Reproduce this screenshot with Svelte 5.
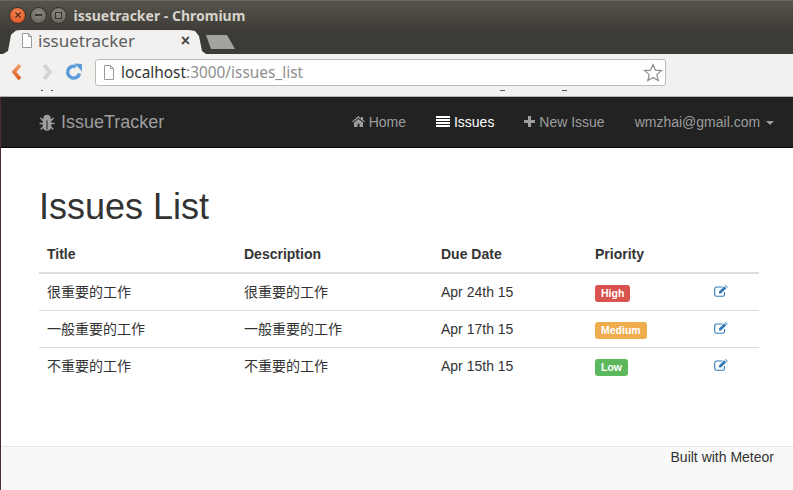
<script>
  const issues = [
    { title: '很重要的工作', due: 'Apr 24th 15', level: 'High', tone: 'high' },
    { title: '一般重要的工作', due: 'Apr 17th 15', level: 'Medium', tone: 'medium' },
    { title: '不重要的工作', due: 'Apr 15th 15', level: 'Low', tone: 'low' }
  ];
</script>

<div class="window">
  <header class="frame">
    <div class="titlebar">
      <span class="btn close">
        <svg width="8" height="8" viewBox="0 0 8 8"><path d="M1.500 1.500l5 5M6.500 1.500l-5 5" stroke="#5a2412" stroke-width="1.400"/></svg>
      </span>
      <span class="btn"><i class="min"></i></span>
      <span class="btn"><i class="max"></i></span>
      <span class="wintitle">issuetracker - Chromium</span>
    </div>
    <div class="tabs">
      <div class="tab">
        <svg class="page" width="12" height="15" viewBox="0 0 12 15"><path d="M1.500.5h6l3 3v11h-9z M7.500.5v3h3" fill="#fff" stroke="#9a9a9a"/></svg>
        <span class="tabname">issuetracker</span>
        <span class="tabclose">×</span>
      </div>
      <div class="newtab"></div>
    </div>
  </header>

  <div class="toolbar">
    <svg class="nav" width="14" height="18" viewBox="0 0 14 18">
      <defs><linearGradient id="back" x1="0" y1="0" x2="0" y2="1"><stop offset="0" stop-color="#f0a070"/><stop offset="1" stop-color="#d85a20"/></linearGradient></defs>
      <path d="M10 2L4 9l6 7" fill="none" stroke="url(#back)" stroke-width="3.600"/>
    </svg>
    <svg class="nav fwd" width="14" height="18" viewBox="0 0 14 18"><path d="M4 2l6 7-6 7" fill="none" stroke="#d4d4d2" stroke-width="4"/></svg>
    <svg class="nav reload" width="18" height="18" viewBox="0 0 18 18"><path d="M14.500 10.500A6 6 0 1 1 11 3.600" fill="none" stroke="#5b9bd8" stroke-width="3.400"/><path d="M9.500 0.500L17 1v7.500z" fill="#5b9bd8"/></svg>
    <div class="omnibox">
      <svg width="12" height="15" viewBox="0 0 12 15"><path d="M1.500.5h6l3 3v11h-9z M7.500.5v3h3" fill="#fff" stroke="#9a9a9a"/></svg>
      <span class="url"><b>localhost</b>:3000/issues_list</span>
      <svg class="star" width="20" height="19" viewBox="0 0 20 19"><path d="M10 1.500l2.400 5.600 6 .5-4.600 4 1.400 5.900L10 14.400l-5.200 3.100 1.400-5.900-4.600-4 6-.5z" fill="#fff" stroke="#8c8c8c" stroke-width="1.200"/></svg>
    </div>
    <i class="speck s1"></i>
    <i class="speck s2"></i>
    <i class="speck s3"></i>
    <i class="speck s4"></i>
  </div>

  <div class="page-area">
    <nav class="navbar">
      <a class="brand" href="#top">
        <svg width="16" height="17" viewBox="0 0 16 17"><path d="M5 4.500a3 3 0 0 1 6 0zM4.400 5.500h7.200v7a3.600 3.600 0 0 1-7.200 0zM4 6.500L1.200 3.800M12 6.500l2.800-2.700M4 9.500H.5M12 9.500h3.500M4.500 12.500l-2.800 3M11.500 12.500l2.800 3" fill="#9d9d9d" stroke="#9d9d9d" stroke-width="1.400"/><path d="M8 6.500v9" stroke="#222" stroke-width="1"/></svg>
        IssueTracker
      </a>
      <ul class="links">
        <li>
          <a href="#top">
            <svg width="13" height="11" viewBox="0 0 13 11"><path d="M6.500 0L0 5.500l.8.8L6.500 1.700l5.700 4.600.8-.8-2-1.700V1H9v1.400zM2 6.500L6.500 3 11 6.500V11H7.500V7.800h-2V11H2z" fill="#9d9d9d"/></svg>
            Home
          </a>
        </li>
        <li>
          <a class="active" href="#top">
            <svg width="14" height="11" viewBox="0 0 14 11"><path d="M0 0h14v2H0zM0 3h14v2H0zM0 6h14v2H0zM0 9h14v2H0z" fill="#fff"/></svg>
            Issues
          </a>
        </li>
        <li>
          <a href="#top">
            <svg width="11" height="11" viewBox="0 0 11 11"><path d="M4 0h3v4h4v3H7v4H4V7H0V4h4z" fill="#9d9d9d"/></svg>
            New Issue
          </a>
        </li>
        <li>
          <a href="#top">wmzhai@gmail.com <i class="caret"></i></a>
        </li>
      </ul>
    </nav>

    <main>
      <h1>Issues List</h1>
      <table>
        <thead>
          <tr>
            <th class="c1">Title</th>
            <th class="c2">Description</th>
            <th class="c3">Due Date</th>
            <th class="c4">Priority</th>
            <th></th>
          </tr>
        </thead>
        <tbody>
          {#each issues as issue}
            <tr>
              <td>{issue.title}</td>
              <td>{issue.title}</td>
              <td>{issue.due}</td>
              <td><span class="label {issue.tone}">{issue.level}</span></td>
              <td>
                <svg class="edit" width="14" height="12" viewBox="0 0 14 12"><path d="M8.500 2H2.600A1.900 1.900 0 0 0 .7 3.900v5.500a1.900 1.900 0 0 0 1.900 1.900h6a1.900 1.900 0 0 0 1.900-1.900V7" fill="none" stroke="#337ab7" stroke-width="1.100"/><path d="M5 6.500L10.300 1.200 12.300 3.200 7 8.500H5zM11 .5l.6-.5 2.200 2.200-.7.6z" fill="#337ab7"/></svg>
              </td>
            </tr>
          {/each}
        </tbody>
      </table>
    </main>

    <footer>Built with Meteor</footer>
  </div>
</div>

<style>
  :global(body) {
    margin: 0;
    overflow: hidden;
  }
  .window {
    width: 793px;
    height: 490px;
    display: flex;
    flex-direction: column;
    font-family: "Liberation Sans", "Noto Sans CJK SC", sans-serif;
    font-size: 14px;
    color: #333;
    background: #fff;
    overflow: hidden;
  }
  .frame {
    height: 54px;
    background: linear-gradient(#57544c, #3d3b36 60%, #3c3b37);
    box-shadow: inset 0 1px 0 #6b675e;
    flex: none;
  }
  .titlebar {
    height: 30px;
    display: flex;
    align-items: center;
    padding-left: 9px;
    gap: 3.500px;
  }
  .btn {
    width: 15px;
    height: 15px;
    border-radius: 50%;
    background: radial-gradient(circle at 50% 35%, #8d8a80, #5f5c54);
    display: flex;
    align-items: center;
    justify-content: center;
    border: 0.5px solid #33312c;
  }
  .close {
    background: radial-gradient(circle at 50% 35%, #f28b5d, #dd4814);
  }
  .min {
    display: block;
    width: 7px;
    height: 1.500px;
    background: #37352f;
  }
  .max {
    display: block;
    width: 5px;
    height: 5px;
    border: 1.500px solid #37352f;
  }
  .wintitle {
    margin-left: 3px;
    font-family: "Noto Sans", "Open Sans", sans-serif;
    font-size: 14px;
    font-weight: 700;
    color: #d6d3cc;
  }
  .tabs {
    height: 24px;
    display: flex;
    align-items: flex-end;
    padding-left: 3px;
  }
  .tab {
    width: 203px;
    height: 24px;
    box-sizing: border-box;
    padding: 0 16px 3px 18px;
    background: #f2f1f0;
    clip-path: polygon(0 100%, 5px 88%, 8px 20%, 13px 2%, 18px 0, 186px 0, 192px 4%, 196px 25%, 199px 88%, 203px 100%);
    display: flex;
    align-items: center;
    gap: 5px;
  }
  .tabname {
    font-family: "Noto Sans", "Open Sans", sans-serif;
    font-size: 17px;
    line-height: 20px;
    color: #5d5d5d;
    flex: 1;
  }
  .tabclose {
    font-size: 16px;
    line-height: 20px;
    font-weight: 700;
    color: #444;
  }
  .newtab {
    width: 30px;
    height: 14px;
    margin: 0 0 5px -1px;
    background: #a5a39f;
    clip-path: polygon(1px 0, 22px 0, 30px 100%, 6px 100%);
  }
  .toolbar {
    height: 43px;
    flex: none;
    box-sizing: border-box;
    background: #f2f1f0;
    border-bottom: 1px solid #b4b2ae;
    display: flex;
    align-items: flex-start;
    padding: 5px 0 0 10px;
    position: relative;
  }
  .nav {
    margin-top: 4px;
    margin-right: 16px;
  }
  .fwd {
    margin-right: 11px;
  }
  .reload {
    margin-right: 12px;
  }
  .omnibox {
    width: 571px;
    height: 27px;
    box-sizing: border-box;
    background: #fff;
    border: 1px solid #bdbcb8;
    border-radius: 3px;
    display: flex;
    align-items: center;
    padding-left: 7px;
    gap: 6px;
  }
  .url {
    flex: 1;
    font-family: "Noto Sans", "Open Sans", sans-serif;
    font-size: 15.400px;
    color: #8e8e8e;
    line-height: 24px;
  }
  .url b {
    font-weight: 400;
    color: #333;
  }
  .star {
    margin-right: 2px;
  }
  .speck {
    position: absolute;
    top: 36px;
    width: 2px;
    height: 1px;
    background: #555;
  }
  .s1 {
    left: 41px;
  }
  .s2 {
    left: 51px;
  }
  .s3 {
    left: 500px;
    width: 5px;
  }
  .s4 {
    left: 562px;
    width: 5px;
  }
  .page-area {
    flex: 1;
    display: flex;
    flex-direction: column;
    border-left: 1px solid #4b2a3a;
    min-height: 0;
  }
  .navbar {
    height: 51px;
    flex: none;
    box-sizing: border-box;
    background: #222;
    border-bottom: 1px solid #080808;
    display: flex;
    align-items: center;
    justify-content: space-between;
    padding: 0 4px 0 38px;
  }
  a {
    text-decoration: none;
    color: #9d9d9d;
  }
  .brand {
    font-size: 18px;
    display: flex;
    align-items: center;
    gap: 6px;
  }
  .links {
    list-style: none;
    margin: 0;
    padding: 0;
    display: flex;
  }
  .links a {
    display: block;
    padding: 0 15px;
    white-space: nowrap;
  }
  .links .active {
    color: #fff;
  }
  .caret {
    display: inline-block;
    margin-left: 2px;
    vertical-align: middle;
    border-top: 4px solid #9d9d9d;
    border-left: 4px solid transparent;
    border-right: 4px solid transparent;
  }
  main {
    flex: 1;
    padding: 39px 33px 0 38px;
  }
  h1 {
    margin: 0 0 9px;
    font-size: 36px;
    font-weight: 500;
    line-height: 1.1;
    color: #333;
  }
  table {
    width: 720px;
    border-collapse: collapse;
    table-layout: fixed;
    line-height: 20px;
  }
  th {
    text-align: left;
    padding: 8px;
    font-weight: 700;
    border-bottom: 2px solid #ddd;
  }
  td {
    padding: 8px;
    height: 20px;
    border-top: 1px solid #ddd;
  }
  tbody tr:first-child td {
    border-top: 0;
  }
  .c1, .c2 {
    width: 181px;
  }
  .c3 {
    width: 138px;
  }
  .c4 {
    width: 103px;
  }
  .label {
    display: block;
    width: fit-content;
    margin-top: 3px;
    padding: 3px 6px;
    font-size: 10.500px;
    font-weight: 700;
    line-height: 11px;
    color: #fff;
    border-radius: 3px;
  }
  .high {
    background: #d9534f;
  }
  .medium {
    background: #f0ad4e;
  }
  .low {
    background: #5cb85c;
  }
  .edit {
    display: block;
    margin: 3px 0 5px;
  }
  footer {
    height: 44px;
    flex: none;
    box-sizing: border-box;
    background: #f8f8f8;
    border-top: 1px solid #e7e7e7;
    text-align: right;
    padding-right: 19px;
    line-height: 20px;
  }
</style>
